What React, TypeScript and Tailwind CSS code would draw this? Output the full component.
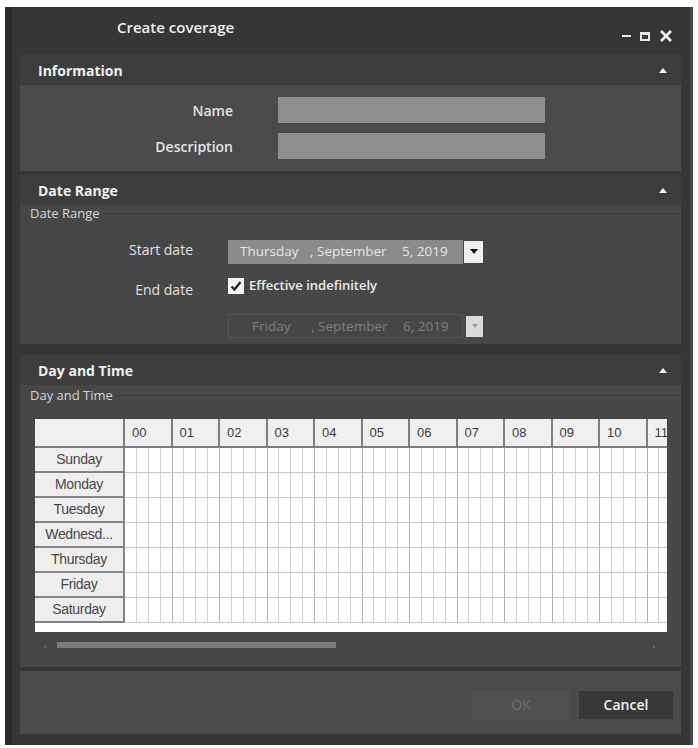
import React from 'react';

const hours = ['00', '01', '02', '03', '04', '05', '06', '07', '08', '09', '10', '11'];
const days = ['Sunday', 'Monday', 'Tuesday', 'Wednesd...', 'Thursday', 'Friday', 'Saturday'];

const UpArrow = () => (
  <span className="h-0 w-0 border-x-[4px] border-b-[5px] border-x-transparent border-b-[#f2f2f2]" />
);

const SectionHeader = ({ title }: { title: string }) => (
  <div className="flex h-[30px] items-center justify-between bg-[#3d3d3d] pl-[18px] pr-[14px]">
    <span className="text-[14px] font-bold text-[#efefef]">{title}</span>
    <UpArrow />
  </div>
);

const Legend = ({ text }: { text: string }) => (
  <div className="flex h-[16px] items-center">
    <span className="pl-[10px] pr-[4px] text-[13px] leading-none text-[#d6d6d6]">{text}</span>
    <span className="h-px flex-1 bg-[#3a3a3a]" />
  </div>
);

const DateField = ({ day, date, disabled }: { day: string; date: string; disabled?: boolean }) => (
  <div className="flex h-[24px] items-center">
    <div
      className={
        disabled
          ? 'flex h-[24px] w-[235px] items-center border border-[#565656] bg-[#474747] text-[13.5px] text-[#808080]'
          : 'flex h-[24px] w-[235px] items-center bg-[#8b8b8b] text-[13.5px] text-[#e6e6e6]'
      }
    >
      <span className={disabled ? 'w-[82px] pl-[23px]' : 'w-[82px] pl-[12px]'}>{day}</span>
      <span className="w-[92px]">, September</span>
      <span>{date}</span>
    </div>
    <div
      className={
        disabled
          ? 'ml-[3px] flex h-[21px] w-[17px] items-center justify-center bg-[#dadada]'
          : 'ml-[1px] flex h-[22px] w-[19px] items-center justify-center bg-[#f0f0f0]'
      }
    >
      <span
        className={
          disabled
            ? 'h-0 w-0 border-x-[3px] border-t-[4px] border-x-transparent border-t-[#9a9a9a]'
            : 'h-0 w-0 border-x-[4px] border-t-[5px] border-x-transparent border-t-[#111]'
        }
      />
    </div>
  </div>
);

const Grid = () => (
  <div className="ml-[15px] w-[632px] overflow-hidden bg-white font-['Liberation_Sans',Arial,sans-serif]">
    <div className="flex">
      <div className="h-[29px] w-[90px] shrink-0 border-r-2 border-b-2 border-[#7e7e7e] bg-[#f0f0f0]" />
      {hours.map((h) => (
        <div
          key={h}
          className="flex h-[29px] w-[47.5px] shrink-0 items-center border-r-2 border-b-2 border-[#7e7e7e] bg-[#f0f0f0] pl-[7px] text-[13px] text-[#3c3c3c]"
        >
          {h}
        </div>
      ))}
    </div>
    {days.map((d) => (
      <div key={d} className="flex">
        <div className="flex h-[25px] w-[90px] shrink-0 items-center justify-center border-r-2 border-b-2 border-[#858585] bg-[#eeeeee] text-[14px] tracking-[-0.3px] text-[#474747]">
          {d}
        </div>
        {hours.map((h) => (
          <div key={h} className="flex h-[25px] w-[47.5px] shrink-0 border-b border-[#c8c8c8]">
            {[0, 1, 2, 3].map((q) => (
              <div
                key={q}
                className={
                  q === 3
                    ? 'h-full flex-1 border-r border-[#b0b0b0]'
                    : 'h-full flex-1 border-r border-[#d2d2d2]'
                }
              />
            ))}
          </div>
        ))}
      </div>
    ))}
    <div className="h-[9px]" />
  </div>
);

export default function App() {
  return (
    <div className="h-[748px] w-[698px] bg-white pt-[7px] pl-[5px] font-['Open_Sans','Noto_Sans',sans-serif]">
      <div className="flex h-[738px] w-[688px] flex-col border-l-[7px] border-r-[3px] border-l-[#2a2a2a] border-r-[#464646] bg-[#363636] pr-[9px] pl-[8px]">
        {/* title bar */}
        <div className="flex h-[48px] shrink-0">
          <div className="pt-[10px] pl-[97px] text-[15px] leading-[20px] font-semibold text-[#f0f0f0]">
            Create coverage
          </div>
          <div className="mt-[22px] ml-auto mr-[8px] flex h-[14px] items-center gap-[9px]">
            <span className="h-[2px] w-[9px] bg-[#eeeeee]" />
            <span className="h-[9px] w-[10px] border-[2px] border-t-[3px] border-[#e8e8e8]" />
            <svg width="14" height="14" viewBox="0 0 14 14">
              <path d="M2 2 L12 12 M12 2 L2 12" stroke="#f2f2f2" strokeWidth="2.6" />
            </svg>
          </div>
        </div>

        {/* Information */}
        <SectionHeader title="Information" />
        <div className="flex h-[86px] flex-col gap-[10px] bg-[#4b4b4b] pt-[12px]">
          <div className="flex items-center">
            <span className="w-[213px] text-right text-[14px] font-semibold text-[#e4e4e4]">Name</span>
            <span className="ml-[45px] h-[26px] w-[267px] bg-[#8e8e8e]" />
          </div>
          <div className="flex items-center">
            <span className="w-[213px] text-right text-[14px] font-semibold text-[#e4e4e4]">Description</span>
            <span className="ml-[45px] h-[26px] w-[267px] bg-[#8e8e8e]" />
          </div>
        </div>

        {/* Date Range */}
        <div className="mt-[4px]">
          <SectionHeader title="Date Range" />
        </div>
        <div className="h-[139px] bg-[#474747]">
          <Legend text="Date Range" />
          <div className="mt-[18px] flex items-center">
            <span className="w-[173px] pb-[4px] text-right text-[14px] text-[#e2e2e2]">Start date</span>
            <div className="ml-[35px]">
              <DateField day="Thursday" date="5, 2019" />
            </div>
          </div>
          <div className="mt-[12px] flex h-[20px] items-center">
            <span className="w-[173px] pt-[6px] text-right text-[14px] text-[#e2e2e2]">End date</span>
            <span className="ml-[35px] flex h-[16px] w-[16px] items-center justify-center bg-[#f4f4f4]">
              <svg width="12" height="12" viewBox="0 0 12 12">
                <path d="M1.5 6.5 L4.5 9.5 L10.5 2" stroke="#222" strokeWidth="2.2" fill="none" />
              </svg>
            </span>
            <span className="ml-[5px] text-[13px] font-semibold text-[#ececec]">Effective indefinitely</span>
          </div>
          <div className="mt-[18px] ml-[208px]">
            <DateField day="Friday" date="6, 2019" disabled />
          </div>
        </div>

        {/* Day and Time */}
        <div className="mt-[11px]">
          <SectionHeader title="Day and Time" />
        </div>
        <div className="h-[282px] bg-[#474747] pt-[2px]">
          <Legend text="Day and Time" />
          <div className="mt-[16px]">
            <Grid />
          </div>
          <div className="mt-[8px] flex h-[10px] items-center pr-[26px] pl-[24px]">
            <span className="text-[9px] leading-none text-[#8a8a8a]">‹</span>
            <span className="ml-[10px] h-[6px] w-[279px] bg-[#7b7b7b]" />
            <span className="ml-auto text-[9px] leading-none text-[#8a8a8a]">›</span>
          </div>
        </div>

        {/* footer */}
        <div className="mt-[4px] flex h-[63px] items-center justify-end gap-[9px] bg-[#4b4b4b] pt-[4px] pr-[8px]">
          <button className="h-[30px] w-[98px] bg-[#505050] text-[14px] text-[#6e6e6e]">OK</button>
          <button className="h-[28px] w-[94px] bg-[#383838] text-[14px] font-semibold text-[#f2f2f2]">Cancel</button>
        </div>
      </div>
    </div>
  );
}
